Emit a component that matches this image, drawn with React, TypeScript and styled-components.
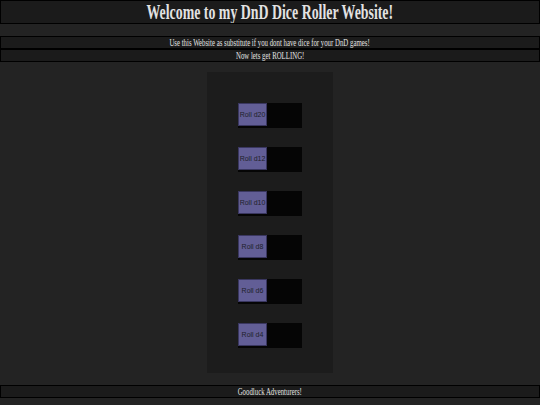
import React from 'react'
import styled, { createGlobalStyle } from 'styled-components'

const dice = [20, 12, 10, 8, 6, 4]

const GlobalStyle = createGlobalStyle`
  html, body {
    margin: 0;
    padding: 0;
    background: #232323;
    color: #e2e2e2;
    font-family: 'Liberation Serif', 'Times New Roman', serif;
  }
`

const Page = styled.div`
  display: flex;
  flex-direction: column;
  min-height: 405px;
`

const Box = styled.div<{ $h: number }>`
  height: ${(p) => p.$h}px;
  box-sizing: border-box;
  border: 1px solid #000;
  background: #1b1b1b;
  display: flex;
  align-items: center;
  justify-content: center;
  overflow: hidden;
`

const Squeeze = styled.span<{ $size: number; $bold?: boolean; $scale?: number }>`
  display: inline-block;
  white-space: nowrap;
  font-size: ${(p) => p.$size}px;
  font-weight: ${(p) => (p.$bold ? 700 : 400)};
  transform: scaleX(${(p) => p.$scale ?? 0.66});
  line-height: 1;
`

const Header = styled(Box)`
  margin-bottom: 12px;
`

const Footer = styled(Box)`
  margin-top: 12px;
`

const Panel = styled.div`
  width: 126px;
  height: 301px;
  margin: 10px auto 0;
  box-sizing: border-box;
  background: #1c1c1c;
  display: flex;
  flex-direction: column;
  align-items: center;
  padding-top: 31px;
  gap: 19px;
`

const DieRow = styled.div`
  width: 64px;
  height: 25px;
  background: #050505;
  display: flex;
  align-items: flex-start;
`

const RollButton = styled.button`
  width: 29px;
  height: 23px;
  margin: 0;
  padding: 0;
  box-sizing: border-box;
  border: 1px solid #3a3760;
  background: #625e96;
  color: #1e1e2a;
  font-family: 'Liberation Sans', Arial, sans-serif;
  font-size: 7px;
  white-space: nowrap;
  cursor: pointer;
`

export default function App() {
  return (
    <Page>
      <GlobalStyle />
      <Header $h={24}>
        <Squeeze $size={21} $bold>Welcome to my DnD Dice Roller Website!</Squeeze>
      </Header>
      <Box $h={13}>
        <Squeeze $size={11} $scale={0.62}>
          Use this Website as substitute if you dont have dice for your DnD games!
        </Squeeze>
      </Box>
      <Box $h={13}>
        <Squeeze $size={11} $scale={0.62}>Now lets get ROLLING!</Squeeze>
      </Box>
      <Panel>
        {dice.map((d) => (
          <DieRow key={d}>
            <RollButton>Roll d{d}</RollButton>
          </DieRow>
        ))}
      </Panel>
      <Footer $h={13}>
        <Squeeze $size={11} $scale={0.62}>Goodluck Adventurers!</Squeeze>
      </Footer>
    </Page>
  )
}
